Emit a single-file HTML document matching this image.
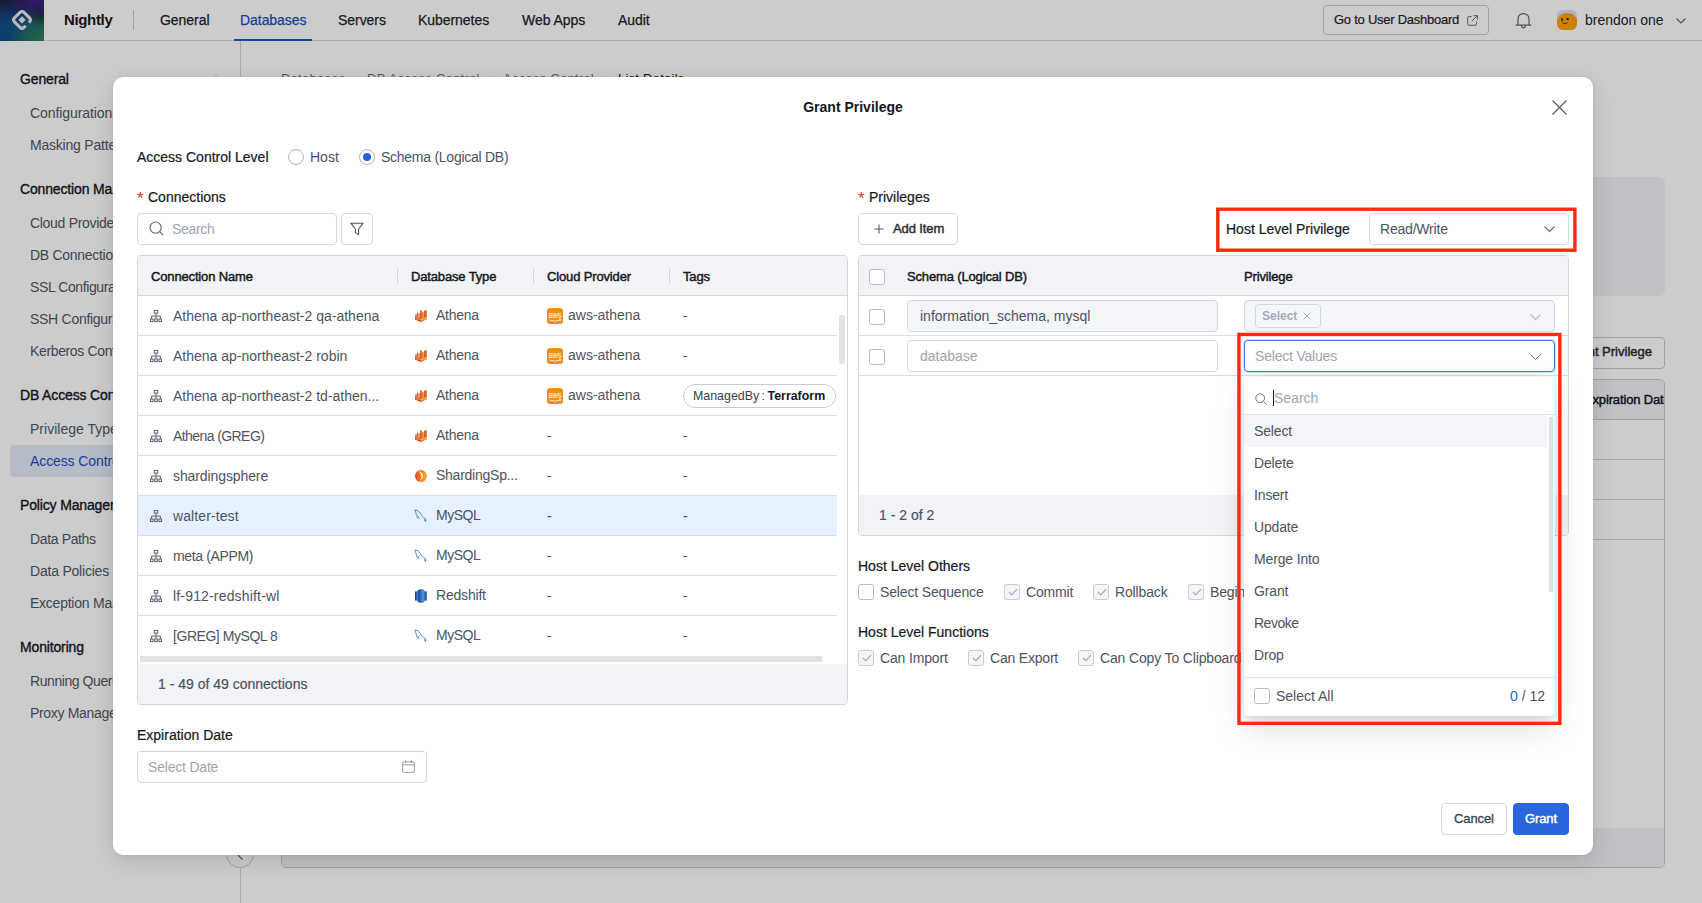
<!DOCTYPE html>
<html lang="en">
<head>
<meta charset="utf-8">
<title>Grant Privilege</title>
<style>
*{box-sizing:border-box;margin:0;padding:0}
html,body{width:1702px;height:903px;overflow:hidden;background:#fff}
body{font-family:"Liberation Sans",sans-serif;font-size:14px;color:#2a2e36;position:relative;-webkit-font-smoothing:antialiased}
.a{position:absolute}
.t{position:absolute;white-space:nowrap;line-height:20px;height:20px}
.m{-webkit-text-stroke:.2px}
.sb{-webkit-text-stroke:.45px}
.b{font-weight:bold}
svg{display:block;overflow:visible}
/* ---------- page behind ---------- */
#hdr{left:0;top:0;width:1702px;height:41px;background:#fff;border-bottom:1px solid #d3d9e2}
#logo{left:0;top:0;width:44px;height:41px;background:
 radial-gradient(ellipse 85% 75% at 100% 100%,#2d8556 0%,rgba(42,128,90,.7) 45%,rgba(42,128,100,0) 100%),
 radial-gradient(ellipse 80% 45% at 85% 0%,#46208a 0%,rgba(62,30,120,.7) 45%,rgba(62,30,120,0) 100%),
 radial-gradient(ellipse 40% 30% at 100% 42%,#181a26 0%,rgba(24,26,38,0) 100%),
 linear-gradient(180deg,#1c1d3a 0%,#173c70 28%,#14508a 60%,#124a86 100%)}
.nav{font-size:14px;color:#1f232b;top:10px;-webkit-text-stroke:.25px;letter-spacing:-.05px}
#side{left:0;top:41px;width:241px;height:862px;background:#fff;border-right:1px solid #d3d9e2}
.sh{left:20px;font-size:14px;color:#15181e;letter-spacing:-.15px;-webkit-text-stroke:.35px}
.si{left:30px;font-size:14px;color:#505866}
.bc{top:69px;font-size:13px;color:#6b7482;letter-spacing:.25px}
#veil{left:0;top:0;width:1702px;height:903px;background:rgba(0,0,0,.2)}
/* ---------- modal ---------- */
#modal{left:113px;top:77px;width:1480px;height:778px;background:#fff;border-radius:10px;box-shadow:0 6px 24px rgba(0,0,0,.13),0 0 4px rgba(0,0,0,.06)}
.lbl{color:#15181e;font-size:14px}
.txt{color:#4b5361;font-size:14px}
.ph{color:#9ca5b2;font-size:14px}
.box{position:absolute;border:1px solid #d3d8e0;border-radius:4px;background:#fff}
.hd{font-size:13px;color:#15181e;letter-spacing:-.15px;-webkit-text-stroke:.45px;margin-top:1px}
.ck{position:absolute;width:16px;height:16px;border:1px solid #b5bdc9;border-radius:3px;background:#fff}
.ck.d{background:#f4f5f8;border-color:#c6ccd6}
.row{position:absolute;left:0;width:699px;height:40px;border-bottom:1px solid #d9dde4}
.red{position:absolute;border:3px solid #ff2a0c}
</style>
</head>
<body>
<!-- PAGE -->
<div id="page" class="a" style="left:0;top:0;width:1702px;height:903px">
<div id="hdr" class="a"></div>
<div id="logo" class="a">
 <svg class="a" style="left:0;top:0" width="44" height="41" viewBox="0 0 44 41" fill="none"><path d="M25.63 25.77 L23.98 27.42 Q22.00 29.40 20.02 27.42 L14.48 21.88 Q12.50 19.90 14.48 17.92 L20.02 12.38 Q22.00 10.40 23.98 12.38 L29.52 17.92 Q31.50 19.90 29.52 21.88 L28.88 22.52" stroke="#e9e9ec" stroke-width="3" stroke-linejoin="round"/><path d="M22.00 16.70 L25.20 19.90 L22.00 23.10 L18.80 19.90Z" fill="#e9e9ec" stroke="#e9e9ec" stroke-width="1" stroke-linejoin="round"/></svg>
</div>
<div class="t b" style="left:64px;top:10px;font-size:15px;letter-spacing:-.35px;color:#15181e">Nightly</div>
<div class="a" style="left:133px;top:10px;width:1px;height:20px;background:#c9ced6"></div>
<div class="t nav" style="left:160px">General</div>
<div class="t nav" style="left:240px;color:#1d4fbf">Databases</div>
<div class="a" style="left:234px;top:39px;width:78px;height:2px;background:#2258c8"></div>
<div class="t nav" style="left:338px">Servers</div>
<div class="t nav" style="left:418px">Kubernetes</div>
<div class="t nav" style="left:522px">Web Apps</div>
<div class="t nav" style="left:618px">Audit</div>
<div class="box" style="left:1323px;top:5px;width:166px;height:30px;border-color:#c3c9d3"></div>
<div class="t m" style="left:1334px;top:10px;font-size:13px;letter-spacing:-.25px;color:#1f232b">Go to User Dashboard</div>
<svg class="a" style="left:1467px;top:14.5px" width="11" height="11" viewBox="0 0 11 11" fill="none" stroke="#6b7482" stroke-width="1"><path d="M4.5 1.5H2.2Q.7 1.5 .7 3V8.8Q.7 10.3 2.2 10.3H8Q9.5 10.3 9.5 8.8V6.5M6.5 .6H10.4V4.5M10.3 .7L4.8 6.2"/></svg>
<svg class="a" style="left:1514.500px;top:11.500px" width="17" height="17" viewBox="0 0 16 16" fill="none" stroke="#5c6572" stroke-width="1.1" stroke-linecap="round"><path d="M1 12.3H15M2.8 12.3V7.2Q2.8 1.6 8 1.6Q13.2 1.6 13.2 7.2V12.3M6.2 12.6Q6.2 14.9 8 14.9Q9.8 14.9 9.8 12.6"/></svg>
<div class="a" style="left:1557px;top:10px;width:20px;height:20px;border-radius:6px;background:#d4e1f5;overflow:hidden">
 <div class="a" style="left:-1px;top:3px;width:22px;height:20px;border-radius:11px 11px 8px 8px;background:#ffa30d"></div>
 <div class="a" style="left:4px;top:8px;width:2px;height:2.500px;background:#5a3200;border-radius:1px"></div>
 <div class="a" style="left:9px;top:8px;width:2.500px;height:2px;background:#5a3200;border-radius:1px"></div>
 <div class="a" style="left:5px;top:11px;width:6px;height:3px;border-bottom:1.300px solid #5a3200;border-radius:0 0 4px 4px"></div>
</div>
<div class="t" style="left:1585px;top:10px;font-size:14px;color:#1f232b">brendon one</div>
<svg class="a" style="left:1676px;top:18px" width="10" height="6" viewBox="0 0 10 6" fill="none" stroke="#5c6572" stroke-width="1.1"><path d="M.5 .5L5 5L9.5 .5"/></svg>

<div id="side" class="a"></div>
<div class="t sh" style="top:69px">General</div>
<div class="t si" style="top:103px;letter-spacing:-0.08px">Configurations</div>
<div class="t si" style="top:135px;letter-spacing:-0.21px">Masking Patterns</div>
<div class="t sh" style="top:179px">Connection Management</div>
<div class="t si" style="top:213px;letter-spacing:-0.3px">Cloud Providers</div>
<div class="t si" style="top:245px;letter-spacing:-0.29px">DB Connections</div>
<div class="t si" style="top:277px;letter-spacing:-0.4px">SSL Configurations</div>
<div class="t si" style="top:309px;letter-spacing:-0.28px">SSH Configurations</div>
<div class="t si" style="top:341px;letter-spacing:-0.36px">Kerberos Configurations</div>
<div class="t sh" style="top:385px">DB Access Control</div>
<div class="t si" style="top:419px;letter-spacing:0.01px">Privilege Type</div>
<div class="a" style="left:10px;top:445px;width:220px;height:32px;border-radius:4px;background:#e3ebfa"></div>
<div class="t si" style="top:451px;color:#1d4fbf;letter-spacing:-0.1px">Access Control</div>
<div class="t sh" style="top:495px">Policy Management</div>
<div class="t si" style="top:529px;letter-spacing:-0.36px">Data Paths</div>
<div class="t si" style="top:561px;letter-spacing:-0.21px">Data Policies</div>
<div class="t si" style="top:593px;letter-spacing:-0.24px">Exception Management</div>
<div class="t sh" style="top:637px">Monitoring</div>
<div class="t si" style="top:671px;letter-spacing:-0.43px">Running Queries</div>
<div class="t si" style="top:703px;letter-spacing:-0.32px">Proxy Management</div>
<svg class="a" style="left:211px;top:76px" width="10" height="6" viewBox="0 0 10 6" fill="none" stroke="#5c6572" stroke-width="1.1"><path d="M.5 5.5L5 1L9.5 5.5"/></svg>
<div class="a" style="left:226px;top:840px;width:28px;height:28px;border-radius:14px;border:1px solid #c3c9d3;background:#fff"></div>
<svg class="a" style="left:237px;top:850px" width="6" height="10" viewBox="0 0 6 10" fill="none" stroke="#5c6572" stroke-width="1.1"><path d="M5.5 .5L1 5L5.5 9.5"/></svg>

<div class="t bc" style="left:281px">Databases</div><div class="t bc" style="left:354px;font-size:10px;margin-top:1px">&gt;</div><div class="t bc" style="left:367px">DB Access Control</div><div class="t bc" style="left:490px;font-size:10px;margin-top:1px">&gt;</div><div class="t bc" style="left:503px">Access Control</div><div class="t bc" style="left:604px;font-size:10px;margin-top:1px">&gt;</div><div class="t bc" style="left:618px;color:#15181e">List Details</div>
<div class="a" style="left:281px;top:177px;width:1384px;height:119px;border-radius:6px;background:#f1f2f5"></div>
<div class="box" style="left:1554px;top:337px;width:111px;height:32px;border-color:#c3c9d3"></div>
<div class="t sb" style="left:1566px;top:342px;font-size:13px;color:#2a2e36">Grant Privilege</div>
<div class="a" style="left:281px;top:379px;width:1384px;height:489px;border:1px solid #c8ccd2;border-radius:5px;background:#fff;overflow:hidden">
 <div class="a" style="left:0;top:0;width:1384px;height:40px;background:#f1f2f5;border-bottom:1px solid #c9ced8"></div>
 <div class="a" style="left:0;top:79px;width:1384px;height:1px;background:#d3d8e0"></div>
 <div class="a" style="left:0;top:119px;width:1384px;height:1px;background:#d3d8e0"></div>
 <div class="a" style="left:0;top:159px;width:1384px;height:1px;background:#d3d8e0"></div>
 <div class="a" style="left:0;top:448px;width:1384px;height:40px;background:#f1f2f5"></div>
</div>
<div class="a" style="left:1570px;top:380px;width:94px;height:39px;overflow:hidden"><div class="t hd" style="left:14px;top:9px">Expiration Date</div></div>
</div>
<div id="veil" class="a"></div>
<!-- MODAL -->
<div id="modal" class="a">
<div class="t b lbl" style="left:0;width:1480px;text-align:center;top:20px;font-size:14px">Grant Privilege</div>
<svg class="a" style="left:1438.5px;top:22.5px;" width="15" height="15" viewBox="0 0 15 15"><path d="M.5 .5L14.500 14.500M14.500 .5L.5 14.500" fill="none" stroke="#545c69" stroke-width="1.200"/></svg>
<div class="t lbl m" style="left:24px;top:70px;">Access Control Level</div>
<div class="a" style="left:175px;top:72px;width:16px;height:16px;border-radius:8px;border:1px solid #aeb6c3;background:#fff"></div>
<div class="t txt" style="left:197px;top:70px;">Host</div>
<div class="a" style="left:246px;top:72px;width:16px;height:16px;border-radius:8px;border:1px solid #aeb6c3;background:#fff"><div class="a" style="left:3px;top:3px;width:8px;height:8px;border-radius:4px;background:#2563dc"></div></div>
<div class="t txt" style="left:268px;top:70px;letter-spacing:-.26px">Schema (Logical DB)</div>
<div class="t " style="left:24px;top:112px;color:#e5342c;font-size:17px">*</div>
<div class="t lbl m" style="left:35px;top:110px;">Connections</div>
<div class="box" style="left:24px;top:136px;width:200px;height:32px;"></div>
<svg class="a" style="left:36px;top:144px;" width="15" height="15" viewBox="0 0 15 15"><circle cx="6.6" cy="6.6" r="5.6" fill="none" stroke="#5c6572" stroke-width="1.1"/><path d="M10.7 10.7L14 14" stroke="#5c6572" stroke-width="1.1" fill="none"/></svg>
<div class="t ph" style="left:59px;top:142px;letter-spacing:-.3px">Search</div>
<div class="box" style="left:228px;top:136px;width:32px;height:32px;"></div>
<svg class="a" style="left:237px;top:145px;" width="14" height="14" viewBox="0 0 14 14"><path d="M.8 1.2H13.2L8.6 7V12.6L5.4 10.6V7Z" fill="none" stroke="#4b5361" stroke-width="1.1" stroke-linejoin="round"/></svg>
<div class="a" id="ltab" style="left:24px;top:178px;width:711px;height:450px;border:1px solid #d3d8e0;border-radius:4px;overflow:hidden;background:#fff">
<div class="a" style="left:0;top:0;width:709px;height:40px;background:#f2f3f7;border-bottom:1px solid #d3d8e0"></div>
<div class="a" style="left:259px;top:12px;width:1px;height:16px;background:#d3d8e0"></div>
<div class="a" style="left:395px;top:12px;width:1px;height:16px;background:#d3d8e0"></div>
<div class="a" style="left:531px;top:12px;width:1px;height:16px;background:#d3d8e0"></div>
<div class="t hd" style="left:13px;top:10px">Connection Name</div>
<div class="t hd" style="left:273px;top:10px">Database Type</div>
<div class="t hd" style="left:409px;top:10px">Cloud Provider</div>
<div class="t hd" style="left:545px;top:10px">Tags</div>
<div class="row" style="top:40px">
<svg class="a" style="left:12px;top:14px" width="12" height="12" viewBox="0 0 12 12" fill="none" stroke="#5c6572" stroke-width="1"><rect x="4.300" y=".45" width="3.400" height="2.700"/><path d="M6 3.200V9M1.600 9V6.100H10.400V9"/><rect x=".45" y="9" width="2.600" height="2.550"/><rect x="4.700" y="9" width="2.600" height="2.550"/><rect x="8.950" y="9" width="2.600" height="2.550"/></svg>
<div class="t txt" style="left:35px;top:10px;letter-spacing:0px">Athena ap-northeast-2 qa-athena</div>
<svg class="a" style="left:277px;top:14px" width="12" height="12" viewBox="0 0 12 12"><path d="M0 7L6 8.200L12 6.600V9.200L6 12L0 9.600Z" fill="#f5832a"/><path d="M0 7L6 8.200V12L0 9.600Z" fill="#c9561a"/><path d="M.3 4.600L1.700 4.200V7.200L.3 7Z" fill="#c9561a"/><path d="M1.900 2.600L3.300 2.900V7.500L1.900 7.200Z" fill="#d8651f"/><path d="M3.600 3.600L4.700 3.400V7.800L3.600 7.600Z" fill="#c9561a"/><path d="M5 .2L6.900 .8V8.200L5 8Z" fill="#d8651f"/><path d="M7.200 2.300L8.500 2V7.800L7.200 8Z" fill="#c9561a"/><path d="M8.900 .8L11.800 0V6.700L8.900 7.600Z" fill="#d8651f"/><path d="M0 8.300L6 9.600L12 7.900" fill="none" stroke="#fbd3b0" stroke-width=".5"/></svg>
<div class="t txt" style="left:298px;top:9px;letter-spacing:-0.25px">Athena</div>
<div class="a" style="left:409px;top:12px;width:16px;height:16px;border-radius:3px;background:#f78b18"><svg class="a" style="left:0;top:0" width="16" height="16" viewBox="0 0 16 16"><text x="1.400" y="10.300" font-family="Liberation Sans,sans-serif" font-size="9.500" fill="#fff" textLength="13.200" lengthAdjust="spacingAndGlyphs">aws</text><path d="M2.200 11.800Q8 14.600 13.600 11.900M12.300 11.300L13.900 11.600L13.300 13" fill="none" stroke="#fff" stroke-width=".8"/></svg></div>
<div class="t txt" style="left:430px;top:9px">aws-athena</div>
<div class="t txt" style="left:545px;top:10px">-</div>
</div>
<div class="row" style="top:80px">
<svg class="a" style="left:12px;top:14px" width="12" height="12" viewBox="0 0 12 12" fill="none" stroke="#5c6572" stroke-width="1"><rect x="4.300" y=".45" width="3.400" height="2.700"/><path d="M6 3.200V9M1.600 9V6.100H10.400V9"/><rect x=".45" y="9" width="2.600" height="2.550"/><rect x="4.700" y="9" width="2.600" height="2.550"/><rect x="8.950" y="9" width="2.600" height="2.550"/></svg>
<div class="t txt" style="left:35px;top:10px;letter-spacing:0px">Athena ap-northeast-2 robin</div>
<svg class="a" style="left:277px;top:14px" width="12" height="12" viewBox="0 0 12 12"><path d="M0 7L6 8.200L12 6.600V9.200L6 12L0 9.600Z" fill="#f5832a"/><path d="M0 7L6 8.200V12L0 9.600Z" fill="#c9561a"/><path d="M.3 4.600L1.700 4.200V7.200L.3 7Z" fill="#c9561a"/><path d="M1.900 2.600L3.300 2.900V7.500L1.900 7.200Z" fill="#d8651f"/><path d="M3.600 3.600L4.700 3.400V7.800L3.600 7.600Z" fill="#c9561a"/><path d="M5 .2L6.900 .8V8.200L5 8Z" fill="#d8651f"/><path d="M7.200 2.300L8.500 2V7.800L7.200 8Z" fill="#c9561a"/><path d="M8.900 .8L11.800 0V6.700L8.900 7.600Z" fill="#d8651f"/><path d="M0 8.300L6 9.600L12 7.900" fill="none" stroke="#fbd3b0" stroke-width=".5"/></svg>
<div class="t txt" style="left:298px;top:9px;letter-spacing:-0.25px">Athena</div>
<div class="a" style="left:409px;top:12px;width:16px;height:16px;border-radius:3px;background:#f78b18"><svg class="a" style="left:0;top:0" width="16" height="16" viewBox="0 0 16 16"><text x="1.400" y="10.300" font-family="Liberation Sans,sans-serif" font-size="9.500" fill="#fff" textLength="13.200" lengthAdjust="spacingAndGlyphs">aws</text><path d="M2.200 11.800Q8 14.600 13.600 11.900M12.300 11.300L13.900 11.600L13.300 13" fill="none" stroke="#fff" stroke-width=".8"/></svg></div>
<div class="t txt" style="left:430px;top:9px">aws-athena</div>
<div class="t txt" style="left:545px;top:10px">-</div>
</div>
<div class="row" style="top:120px">
<svg class="a" style="left:12px;top:14px" width="12" height="12" viewBox="0 0 12 12" fill="none" stroke="#5c6572" stroke-width="1"><rect x="4.300" y=".45" width="3.400" height="2.700"/><path d="M6 3.200V9M1.600 9V6.100H10.400V9"/><rect x=".45" y="9" width="2.600" height="2.550"/><rect x="4.700" y="9" width="2.600" height="2.550"/><rect x="8.950" y="9" width="2.600" height="2.550"/></svg>
<div class="t txt" style="left:35px;top:10px;letter-spacing:0px">Athena ap-northeast-2 td-athen...</div>
<svg class="a" style="left:277px;top:14px" width="12" height="12" viewBox="0 0 12 12"><path d="M0 7L6 8.200L12 6.600V9.200L6 12L0 9.600Z" fill="#f5832a"/><path d="M0 7L6 8.200V12L0 9.600Z" fill="#c9561a"/><path d="M.3 4.600L1.700 4.200V7.200L.3 7Z" fill="#c9561a"/><path d="M1.900 2.600L3.300 2.900V7.500L1.900 7.200Z" fill="#d8651f"/><path d="M3.600 3.600L4.700 3.400V7.800L3.600 7.600Z" fill="#c9561a"/><path d="M5 .2L6.900 .8V8.200L5 8Z" fill="#d8651f"/><path d="M7.200 2.300L8.500 2V7.800L7.200 8Z" fill="#c9561a"/><path d="M8.900 .8L11.800 0V6.700L8.900 7.600Z" fill="#d8651f"/><path d="M0 8.300L6 9.600L12 7.900" fill="none" stroke="#fbd3b0" stroke-width=".5"/></svg>
<div class="t txt" style="left:298px;top:9px;letter-spacing:-0.25px">Athena</div>
<div class="a" style="left:409px;top:12px;width:16px;height:16px;border-radius:3px;background:#f78b18"><svg class="a" style="left:0;top:0" width="16" height="16" viewBox="0 0 16 16"><text x="1.400" y="10.300" font-family="Liberation Sans,sans-serif" font-size="9.500" fill="#fff" textLength="13.200" lengthAdjust="spacingAndGlyphs">aws</text><path d="M2.200 11.800Q8 14.600 13.600 11.900M12.300 11.300L13.900 11.600L13.300 13" fill="none" stroke="#fff" stroke-width=".8"/></svg></div>
<div class="t txt" style="left:430px;top:9px">aws-athena</div>
<div class="a" style="left:545px;top:8px;width:153px;height:24px;border:1px solid #c6ccd6;border-radius:12px;background:#fff"></div><div class="t" style="left:555px;top:10px;font-size:12.4px;color:#3b424d">ManagedBy&thinsp;:&thinsp;<b style="color:#15181e">Terraform</b></div>
</div>
<div class="row" style="top:160px">
<svg class="a" style="left:12px;top:14px" width="12" height="12" viewBox="0 0 12 12" fill="none" stroke="#5c6572" stroke-width="1"><rect x="4.300" y=".45" width="3.400" height="2.700"/><path d="M6 3.200V9M1.600 9V6.100H10.400V9"/><rect x=".45" y="9" width="2.600" height="2.550"/><rect x="4.700" y="9" width="2.600" height="2.550"/><rect x="8.950" y="9" width="2.600" height="2.550"/></svg>
<div class="t txt" style="left:35px;top:10px;letter-spacing:-0.58px">Athena (GREG)</div>
<svg class="a" style="left:277px;top:14px" width="12" height="12" viewBox="0 0 12 12"><path d="M0 7L6 8.200L12 6.600V9.200L6 12L0 9.600Z" fill="#f5832a"/><path d="M0 7L6 8.200V12L0 9.600Z" fill="#c9561a"/><path d="M.3 4.600L1.700 4.200V7.200L.3 7Z" fill="#c9561a"/><path d="M1.900 2.600L3.300 2.900V7.500L1.900 7.200Z" fill="#d8651f"/><path d="M3.600 3.600L4.700 3.400V7.800L3.600 7.600Z" fill="#c9561a"/><path d="M5 .2L6.900 .8V8.200L5 8Z" fill="#d8651f"/><path d="M7.200 2.300L8.500 2V7.800L7.200 8Z" fill="#c9561a"/><path d="M8.900 .8L11.800 0V6.700L8.900 7.600Z" fill="#d8651f"/><path d="M0 8.300L6 9.600L12 7.900" fill="none" stroke="#fbd3b0" stroke-width=".5"/></svg>
<div class="t txt" style="left:298px;top:9px;letter-spacing:-0.25px">Athena</div>
<div class="t txt" style="left:409px;top:10px">-</div>
<div class="t txt" style="left:545px;top:10px">-</div>
</div>
<div class="row" style="top:200px">
<svg class="a" style="left:12px;top:14px" width="12" height="12" viewBox="0 0 12 12" fill="none" stroke="#5c6572" stroke-width="1"><rect x="4.300" y=".45" width="3.400" height="2.700"/><path d="M6 3.200V9M1.600 9V6.100H10.400V9"/><rect x=".45" y="9" width="2.600" height="2.550"/><rect x="4.700" y="9" width="2.600" height="2.550"/><rect x="8.950" y="9" width="2.600" height="2.550"/></svg>
<div class="t txt" style="left:35px;top:10px;letter-spacing:-0.1px">shardingsphere</div>
<svg class="a" style="left:277px;top:14px" width="12" height="12" viewBox="0 0 12 12"><defs><linearGradient id="sg" x1="0" y1="0" x2="1" y2="0"><stop offset="0" stop-color="#e8471c"/><stop offset=".5" stop-color="#f07f1f"/><stop offset="1" stop-color="#f7b02e"/></linearGradient></defs><circle cx="6" cy="6" r="6" fill="url(#sg)"/><path d="M3.800 1.200Q6.400 1.400 8 5.600Q8.300 8.600 4.800 10.800Q7 8.400 6.600 6Q6 3.200 3.800 1.200Z" fill="#fff"/></svg>
<div class="t txt" style="left:298px;top:9px;letter-spacing:-0.25px">ShardingSp...</div>
<div class="t txt" style="left:409px;top:10px">-</div>
<div class="t txt" style="left:545px;top:10px">-</div>
</div>
<div class="row" style="top:240px;background:#e5f1fe">
<svg class="a" style="left:12px;top:14px" width="12" height="12" viewBox="0 0 12 12" fill="none" stroke="#5c6572" stroke-width="1"><rect x="4.300" y=".45" width="3.400" height="2.700"/><path d="M6 3.200V9M1.600 9V6.100H10.400V9"/><rect x=".45" y="9" width="2.600" height="2.550"/><rect x="4.700" y="9" width="2.600" height="2.550"/><rect x="8.950" y="9" width="2.600" height="2.550"/></svg>
<div class="t txt" style="left:35px;top:10px;letter-spacing:0.1px">walter-test</div>
<svg class="a" style="left:276px;top:13px" width="14" height="14" viewBox="0 0 14 14" fill="none" stroke="#3f86ad" stroke-width=".9" stroke-linecap="round" stroke-linejoin="round"><path d="M.8 1Q4.200 .6 6.200 4.200Q8 8 12 10.300L11.300 12.600L10.500 10.600"/><path d="M1.400 1.600Q1.900 5 3.400 8.600L4.300 7.600L4.900 9.600"/></svg>
<div class="t txt" style="left:298px;top:9px;letter-spacing:-0.5px">MySQL</div>
<div class="t txt" style="left:409px;top:10px">-</div>
<div class="t txt" style="left:545px;top:10px">-</div>
</div>
<div class="row" style="top:280px">
<svg class="a" style="left:12px;top:14px" width="12" height="12" viewBox="0 0 12 12" fill="none" stroke="#5c6572" stroke-width="1"><rect x="4.300" y=".45" width="3.400" height="2.700"/><path d="M6 3.200V9M1.600 9V6.100H10.400V9"/><rect x=".45" y="9" width="2.600" height="2.550"/><rect x="4.700" y="9" width="2.600" height="2.550"/><rect x="8.950" y="9" width="2.600" height="2.550"/></svg>
<div class="t txt" style="left:35px;top:10px;letter-spacing:-0.35px">meta (APPM)</div>
<svg class="a" style="left:276px;top:13px" width="14" height="14" viewBox="0 0 14 14" fill="none" stroke="#3f86ad" stroke-width=".9" stroke-linecap="round" stroke-linejoin="round"><path d="M.8 1Q4.200 .6 6.200 4.200Q8 8 12 10.300L11.300 12.600L10.500 10.600"/><path d="M1.400 1.600Q1.900 5 3.400 8.600L4.300 7.600L4.900 9.600"/></svg>
<div class="t txt" style="left:298px;top:9px;letter-spacing:-0.5px">MySQL</div>
<div class="t txt" style="left:409px;top:10px">-</div>
<div class="t txt" style="left:545px;top:10px">-</div>
</div>
<div class="row" style="top:320px">
<svg class="a" style="left:12px;top:14px" width="12" height="12" viewBox="0 0 12 12" fill="none" stroke="#5c6572" stroke-width="1"><rect x="4.300" y=".45" width="3.400" height="2.700"/><path d="M6 3.200V9M1.600 9V6.100H10.400V9"/><rect x=".45" y="9" width="2.600" height="2.550"/><rect x="4.700" y="9" width="2.600" height="2.550"/><rect x="8.950" y="9" width="2.600" height="2.550"/></svg>
<div class="t txt" style="left:35px;top:10px;letter-spacing:0.17px">lf-912-redshift-wl</div>
<svg class="a" style="left:277px;top:13px" width="12" height="14" viewBox="0 0 12 14"><path d="M0 2.800L2.800 2.300V11.700L0 11.200Z" fill="#2c6dc0"/><path d="M0 2.800L1.200 2.600V11.400L0 11.200Z" fill="#1a4a8e"/><path d="M9.200 2.300L12 2.800V11.200L9.200 11.700Z" fill="#1f539c"/><path d="M10.800 2.600L12 2.800V11.200L10.800 11.400Z" fill="#3f82cf"/><path d="M2.800 1.300Q6 -.9 9.200 1.300V12.700Q6 14.900 2.800 12.700Z" fill="#2a66b3"/><path d="M6.500 .1Q8 .3 9.200 1.300V12.700Q8 13.700 6.500 13.900Z" fill="#4a8ed6"/><path d="M2.800 1.300Q3.500 .7 4.400 .4V13.600Q3.500 13.300 2.800 12.700Z" fill="#1e539e"/></svg>
<div class="t txt" style="left:298px;top:9px;letter-spacing:-0.2px">Redshift</div>
<div class="t txt" style="left:409px;top:10px">-</div>
<div class="t txt" style="left:545px;top:10px">-</div>
</div>
<div class="row" style="top:360px;border-bottom:0">
<svg class="a" style="left:12px;top:14px" width="12" height="12" viewBox="0 0 12 12" fill="none" stroke="#5c6572" stroke-width="1"><rect x="4.300" y=".45" width="3.400" height="2.700"/><path d="M6 3.200V9M1.600 9V6.100H10.400V9"/><rect x=".45" y="9" width="2.600" height="2.550"/><rect x="4.700" y="9" width="2.600" height="2.550"/><rect x="8.950" y="9" width="2.600" height="2.550"/></svg>
<div class="t txt" style="left:35px;top:10px;letter-spacing:-0.45px">[GREG] MySQL 8</div>
<svg class="a" style="left:276px;top:13px" width="14" height="14" viewBox="0 0 14 14" fill="none" stroke="#3f86ad" stroke-width=".9" stroke-linecap="round" stroke-linejoin="round"><path d="M.8 1Q4.200 .6 6.200 4.200Q8 8 12 10.300L11.300 12.600L10.500 10.600"/><path d="M1.400 1.600Q1.900 5 3.400 8.600L4.300 7.600L4.900 9.600"/></svg>
<div class="t txt" style="left:298px;top:9px;letter-spacing:-0.5px">MySQL</div>
<div class="t txt" style="left:409px;top:10px">-</div>
<div class="t txt" style="left:545px;top:10px">-</div>
</div>
<div class="a" style="left:701px;top:59px;width:6px;height:49px;border-radius:2px;background:#e2e2e4"></div>
<div class="a" style="left:2px;top:400px;width:682px;height:6px;background:#e2e2e4"></div>
<div class="a" style="left:0;top:408px;width:709px;height:41px;background:#f2f3f7"></div>
<div class="t m txt" style="left:20px;top:418px">1 - 49 of 49 connections</div>
</div>
<div class="t lbl m" style="left:24px;top:648px;">Expiration Date</div>
<div class="box" style="left:24px;top:674px;width:290px;height:32px;"></div>
<div class="t ph" style="left:35px;top:680px;letter-spacing:-.2px">Select Date</div>
<svg class="a" style="left:289px;top:683px;" width="13" height="13" viewBox="0 0 13 13"><rect x=".6" y="1.800" width="11.800" height="10.600" rx="1.200" fill="none" stroke="#8a93a0" stroke-width=".9"/><path d="M.6 4.800H12.400M3.600 .2V3M9.400 .2V3" fill="none" stroke="#8a93a0" stroke-width=".9"/></svg>
<div class="t " style="left:745px;top:112px;color:#e5342c;font-size:17px">*</div>
<div class="t lbl m" style="left:756px;top:110px;">Privileges</div>
<div class="box" style="left:745px;top:136px;width:100px;height:32px;"></div>
<svg class="a" style="left:761px;top:147px;" width="10" height="10" viewBox="0 0 10 10"><path d="M5 .5V9.500M.5 5H9.500" fill="none" stroke="#4b5361" stroke-width="1"/></svg>
<div class="t sb" style="left:780px;top:142px;font-size:13px;letter-spacing:-.1px;color:#2a2e36">Add Item</div>
<div class="t lbl m" style="left:1113px;top:142px;">Host Level Privilege</div>
<div class="box" style="left:1256px;top:136px;width:200px;height:32px;"></div>
<div class="t txt" style="left:1267px;top:142px;letter-spacing:-.2px">Read/Write</div>
<svg class="a" style="left:1431px;top:149px;" width="11" height="6" viewBox="0 0 11 6"><path d="M.5 .5L5.500 5.500L10.500 .5" fill="none" stroke="#5c6572" stroke-width="1.100"/></svg>
<div class="a" id="rtab" style="left:745px;top:178px;width:711px;height:281px;border:1px solid #d3d8e0;border-radius:4px;overflow:hidden;background:#fff">
<div class="a" style="left:0;top:0;width:709px;height:40px;background:#f2f3f7;border-bottom:1px solid #d3d8e0"></div>
<div class="ck" style="left:10px;top:13px"></div>
<div class="t hd" style="left:48px;top:10px">Schema (Logical DB)</div>
<div class="t hd" style="left:385px;top:10px">Privilege</div>
<div class="a" style="left:0;top:79px;width:709px;height:1px;background:#d9dde4"></div>
<div class="a" style="left:0;top:119px;width:709px;height:1px;background:#d9dde4"></div>
<div class="ck" style="left:10px;top:53px"></div>
<div class="ck" style="left:10px;top:93px"></div>
<div class="box" style="left:48px;top:44px;width:311px;height:32px;background:#f4f5f8"></div>
<div class="t txt" style="left:61px;top:50px">information_schema, mysql</div>
<div class="box" style="left:385px;top:44px;width:311px;height:32px;background:#f4f5f8"></div>
<div class="box" style="left:396px;top:48px;width:66px;height:24px;background:#f4f5f8"></div>
<div class="t b" style="left:403px;top:50px;font-size:12px;color:#a3acb9">Select</div>
<svg class="a" style="left:444px;top:56px" width="8" height="8" viewBox="0 0 8 8"><path d="M.5 .5L7.500 7.500M7.500 .5L.5 7.500" fill="none" stroke="#a3acb9" stroke-width="1"/></svg>
<svg class="a" style="left:671px;top:58px" width="11" height="6" viewBox="0 0 11 6"><path d="M.5 .5L5.500 5.500L10.500 .5" fill="none" stroke="#b5bdc9" stroke-width="1.100"/></svg>
<div class="box" style="left:48px;top:84px;width:311px;height:32px"></div>
<div class="t ph" style="left:61px;top:90px">database</div>
<div class="box" style="left:385px;top:84px;width:311px;height:32px;border-color:#3b77e6;box-shadow:0 0 0 1px rgba(59,119,230,.22)"></div>
<div class="t ph" style="left:396px;top:90px;letter-spacing:-.2px">Select Values</div>
<svg class="a" style="left:671px;top:98px" width="11" height="6" viewBox="0 0 11 6"><path d="M.5 .5L5.500 5.500L10.500 .5" fill="none" stroke="#5c6572" stroke-width="1"/></svg>
<div class="a" style="left:0;top:239px;width:709px;height:40px;background:#f2f3f7"></div>
<div class="t m txt" style="left:20px;top:249px">1 - 2 of 2</div>
</div>
<div class="t lbl m" style="left:745px;top:479px;">Host Level Others</div>
<div class="ck" style="left:745px;top:507px"></div>
<div class="t txt" style="left:767px;top:505px;letter-spacing:-0.15px">Select Sequence</div>
<div class="ck d" style="left:891px;top:507px"><svg class="a" style="left:2.500px;top:3px" width="10" height="8" viewBox="0 0 10 8" fill="none" stroke="#9aa3b1" stroke-width="1.1"><path d="M1 4L3.800 6.800L9 1.200"/></svg></div>
<div class="t txt" style="left:913px;top:505px;letter-spacing:-0.15px">Commit</div>
<div class="ck d" style="left:980px;top:507px"><svg class="a" style="left:2.500px;top:3px" width="10" height="8" viewBox="0 0 10 8" fill="none" stroke="#9aa3b1" stroke-width="1.1"><path d="M1 4L3.800 6.800L9 1.200"/></svg></div>
<div class="t txt" style="left:1002px;top:505px;letter-spacing:-0.15px">Rollback</div>
<div class="ck d" style="left:1075px;top:507px"><svg class="a" style="left:2.500px;top:3px" width="10" height="8" viewBox="0 0 10 8" fill="none" stroke="#9aa3b1" stroke-width="1.1"><path d="M1 4L3.800 6.800L9 1.200"/></svg></div>
<div class="t txt" style="left:1097px;top:505px;letter-spacing:-0.15px">Begin</div>
<div class="t lbl m" style="left:745px;top:545px;">Host Level Functions</div>
<div class="ck d" style="left:745px;top:573px"><svg class="a" style="left:2.500px;top:3px" width="10" height="8" viewBox="0 0 10 8" fill="none" stroke="#9aa3b1" stroke-width="1.1"><path d="M1 4L3.800 6.800L9 1.200"/></svg></div>
<div class="t txt" style="left:767px;top:571px;letter-spacing:-0.15px">Can Import</div>
<div class="ck d" style="left:855px;top:573px"><svg class="a" style="left:2.500px;top:3px" width="10" height="8" viewBox="0 0 10 8" fill="none" stroke="#9aa3b1" stroke-width="1.1"><path d="M1 4L3.800 6.800L9 1.200"/></svg></div>
<div class="t txt" style="left:877px;top:571px;letter-spacing:-0.2px">Can Export</div>
<div class="ck d" style="left:965px;top:573px"><svg class="a" style="left:2.500px;top:3px" width="10" height="8" viewBox="0 0 10 8" fill="none" stroke="#9aa3b1" stroke-width="1.1"><path d="M1 4L3.800 6.800L9 1.200"/></svg></div>
<div class="t txt" style="left:987px;top:571px;letter-spacing:-0.15px">Can Copy To Clipboard</div>
<div class="a" id="dd" style="left:1131px;top:300px;width:311px;height:339px;border-radius:4px;background:#fff;box-shadow:0 12px 32px rgba(0,0,0,.13),0 3px 10px rgba(0,0,0,.08);overflow:hidden">
<svg class="a" style="left:11px;top:16px" width="12" height="12" viewBox="0 0 12 12"><circle cx="5.200" cy="5.200" r="4.400" fill="none" stroke="#6b7482" stroke-width="1"/><path d="M8.400 8.400L11.400 11.400" fill="none" stroke="#6b7482" stroke-width="1"/></svg>
<div class="a" style="left:29px;top:13px;width:1px;height:16px;background:#15181e"></div>
<div class="t ph" style="left:30px;top:11px">Search</div>
<div class="a" style="left:0;top:37px;width:311px;height:1px;background:#dfe3e9"></div>
<div class="a" style="left:0;top:38px;width:303px;height:32px;background:#f4f5f8"></div>
<div class="t txt" style="left:10px;top:44px;letter-spacing:-0.15px">Select</div>
<div class="t txt" style="left:10px;top:76px;letter-spacing:-0.15px">Delete</div>
<div class="t txt" style="left:10px;top:108px;letter-spacing:-0.15px">Insert</div>
<div class="t txt" style="left:10px;top:140px;letter-spacing:-0.15px">Update</div>
<div class="t txt" style="left:10px;top:172px;letter-spacing:-0.15px">Merge Into</div>
<div class="t txt" style="left:10px;top:204px;letter-spacing:-0.15px">Grant</div>
<div class="t txt" style="left:10px;top:236px;letter-spacing:-0.5px">Revoke</div>
<div class="t txt" style="left:10px;top:268px;letter-spacing:-0.15px">Drop</div>
<div class="a" style="left:305px;top:40px;width:4px;height:175px;background:#e2e2e4"></div>
<div class="a" style="left:0;top:300px;width:311px;height:1px;background:#dfe3e9"></div>
<div class="ck" style="left:10px;top:311px"></div>
<div class="t txt" style="left:32px;top:309px">Select All</div>
<div class="t txt" style="right:10px;top:309px"><span style="color:#2563dc">0</span> / 12</div>
</div>
<svg class="a" style="left:0;top:0;pointer-events:none" width="1480" height="778" viewBox="113 77 1480 778" fill="none" stroke="#ff2a0c" stroke-width="3.4"><rect x="1217.800" y="209.200" width="357.100" height="41"/><rect x="1238.950" y="334.450" width="320.900" height="388.900"/></svg>
<div class="box" style="left:1328px;top:726px;width:66px;height:32px;"></div>
<div class="t m" style="left:1341px;top:732px;font-size:13px;letter-spacing:-.1px;-webkit-text-stroke:.3px;color:#3b424d">Cancel</div>
<div class="box" style="left:1400px;top:726px;width:56px;height:32px;background:#2866dd;border-color:#2866dd"></div>
<div class="t sb" style="left:1412px;top:732px;font-size:13px;letter-spacing:-.1px;color:#fff">Grant</div>
</div>
</body>
</html>
